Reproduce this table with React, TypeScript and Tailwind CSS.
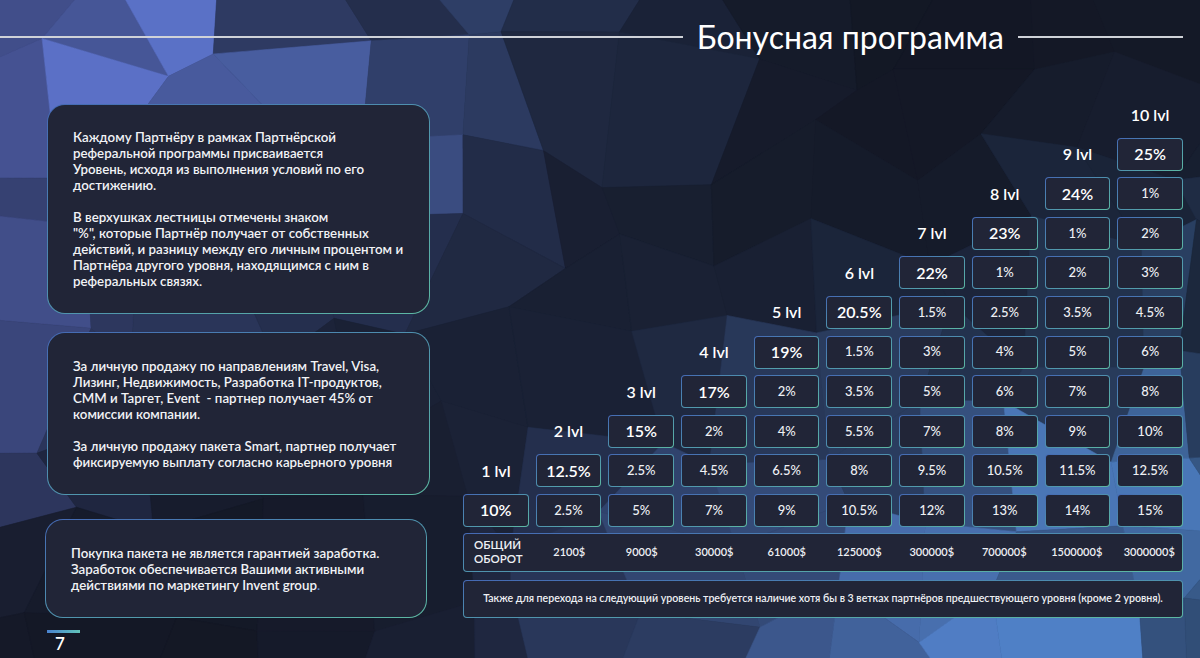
import React from 'react';

const font = { fontFamily: 'Lato, "Open Sans", sans-serif' };

// deterministic noise
function rnd(i: number) {
  const x = Math.sin(i * 127.1 + 311.7) * 43758.5453;
  return x - Math.floor(x);
}

function g(x: number, y: number, cx: number, cy: number, sx: number, sy: number) {
  const dx = (x - cx) / sx;
  const dy = (y - cy) / sy;
  return Math.exp(-(dx * dx + dy * dy));
}

function Mosaic() {
  const cw = 96;
  const ch = 92;
  const cols = 14;
  const rows = 9;
  const pts: { x: number; y: number }[][] = [];
  for (let r = 0; r <= rows; r++) {
    const row: { x: number; y: number }[] = [];
    for (let c = 0; c <= cols; c++) {
      const k = r * 31 + c * 7;
      row.push({
        x: c * cw - 40 + (rnd(k) - 0.5) * cw * 0.75,
        y: r * ch - 30 + (rnd(k + 1000) - 0.5) * ch * 0.75,
      });
    }
    pts.push(row);
  }
  const polys: { d: string; fill: string }[] = [];
  for (let r = 0; r < rows; r++) {
    for (let c = 0; c < cols; c++) {
      const a = pts[r][c], b = pts[r][c + 1], d = pts[r + 1][c + 1], e = pts[r + 1][c];
      const cx = (a.x + b.x + d.x + e.x) / 4;
      const cy = (a.y + b.y + d.y + e.y) / 4;
      let w =
        1.0 * g(cx, cy, 160, 110, 280, 210) +
        0.45 * g(cx, cy, 0, 380, 110, 170) +
        1.0 * g(cx, cy, 980, 640, 360, 240) +
        0.3 * g(cx, cy, 1160, 360, 140, 200) +
        0.2 * g(cx, cy, 560, 40, 160, 120);
      w = Math.min(1, w * (0.55 + 0.8 * rnd(r * 53 + c * 17 + 5)));
      const t = Math.min(1, Math.max(0, cx / 1200));
      const br = [92 - 14 * t, 110 + 20 * t, 198];
      const dk = [19, 23, 36];
      const col = dk.map((v, i) => Math.round(v + (br[i] - v) * w));
      polys.push({
        d: `M${a.x},${a.y} L${b.x},${b.y} L${d.x},${d.y} L${e.x},${e.y} Z`,
        fill: `rgb(${col[0]},${col[1]},${col[2]})`,
      });
    }
  }
  return (
    <svg className="absolute inset-0" width="1200" height="658" viewBox="0 0 1200 658">
      <rect width="1200" height="658" fill="#151a29" />
      {polys.map((p, i) => (
        <path key={i} d={p.d} fill={p.fill} stroke={p.fill} strokeWidth="0.6" />
      ))}
    </svg>
  );
}

const rows: string[][] = [
  ['25%'],
  ['24%', '1%'],
  ['23%', '1%', '2%'],
  ['22%', '1%', '2%', '3%'],
  ['20.5%', '1.5%', '2.5%', '3.5%', '4.5%'],
  ['19%', '1.5%', '3%', '4%', '5%', '6%'],
  ['17%', '2%', '3.5%', '5%', '6%', '7%', '8%'],
  ['15%', '2%', '4%', '5.5%', '7%', '8%', '9%', '10%'],
  ['12.5%', '2.5%', '4.5%', '6.5%', '8%', '9.5%', '10.5%', '11.5%', '12.5%'],
  ['10%', '2.5%', '5%', '7%', '9%', '10.5%', '12%', '13%', '14%', '15%'],
];

const turnover = ['2100$', '9000$', '30000$', '61000$', '125000$', '300000$', '700000$', '1500000$', '3000000$'];

function Frame({ className, inner, children }: { className?: string; inner?: string; children: React.ReactNode }) {
  return (
    <div className={`bg-gradient-to-br from-[#4569b4] to-[#5db9a3] p-px ${className ?? ''}`}>
      <div className={`h-full w-full bg-[#212537] ${inner ?? ''}`}>{children}</div>
    </div>
  );
}

function Cell({ value, big }: { value: string; big?: boolean }) {
  return (
    <Frame className="rounded-[4px]" inner="rounded-[3px] flex items-center justify-center">
      <span className={big ? 'text-[16px] font-semibold text-white' : 'text-[13px] font-medium text-[#eef0f4]'}>{value}</span>
    </Frame>
  );
}

export default function App() {
  const grid: React.ReactNode[] = [];
  for (let r = 0; r <= 10; r++) {
    for (let c = 1; c <= 10; c++) {
      const key = `${r}-${c}`;
      if (r <= 9 && c === 10 - r) {
        grid.push(
          <div key={key} className="flex items-center justify-center text-[16px] font-semibold text-white">
            {10 - r} lvl
          </div>
        );
      } else if (r >= 1 && c >= 11 - r) {
        const vals = rows[r - 1];
        const idx = c - (11 - r);
        grid.push(<Cell key={key} value={vals[idx]} big={idx === 0} />);
      } else {
        grid.push(<div key={key} />);
      }
    }
  }

  return (
    <div className="relative h-[658px] w-[1200px] overflow-hidden bg-[#151a29] text-white" style={font}>
      <Mosaic />
      <div className="relative flex flex-col">
        {/* header */}
        <div className="flex h-[74px] items-center pr-[17px]">
          <div className="h-[1.5px] flex-1 bg-[#cfd2d8]" />
          <h1 className="mx-[14px] text-[32px] font-normal leading-none text-white">Бонусная программа</h1>
          <div className="h-[1.5px] w-[165px] bg-[#cfd2d8]" />
        </div>

        <div className="flex pl-[47px]">
          {/* left column */}
          <div className="flex w-[383px] flex-col pt-[30px] text-[13.3px] font-semibold leading-[16px] text-[#f2f3f6]">
            <Frame className="h-[210px] rounded-[18px]" inner="rounded-[17px] flex items-center pl-[25px]">
              <div className="whitespace-nowrap">
                <p>
                  Каждому Партнёру в рамках Партнёрской<br />
                  реферальной программы присваивается<br />
                  Уровень, исходя из выполнения условий по его<br />
                  достижению.
                </p>
                <p className="mt-4">
                  В верхушках лестницы отмечены знаком<br />
                  "%", которые Партнёр получает от собственных<br />
                  действий, и разницу между его личным процентом и<br />
                  Партнёра другого уровня, находящимся с ним в<br />
                  реферальных связях.
                </p>
              </div>
            </Frame>

            <Frame className="mt-[18px] h-[163px] rounded-[18px]" inner="rounded-[17px] flex items-center pl-[25px]">
              <div className="whitespace-nowrap">
                <p>
                  За личную продажу по направлениям Travel, Visa,<br />
                  Лизинг, Недвижимость, Разработка IT-продуктов,<br />
                  СММ и Таргет, Event&nbsp; - партнер получает 45% от<br />
                  комиссии компании.
                </p>
                <p className="mt-4">
                  За личную продажу пакета Smart, партнер получает<br />
                  фиксируемую выплату согласно карьерного уровня
                </p>
              </div>
            </Frame>

            <Frame className="-ml-[2px] mt-[24px] h-[99px] w-[382px] rounded-[18px]" inner="rounded-[17px] flex items-center pl-[25px]">
              <p className="whitespace-nowrap">
                Покупка пакета не является гарантией заработка.<br />
                Заработок обеспечивается Вашими активными<br />
                действиями по маркетингу Invent group<span className="text-[#5b8fd6]">.</span>
              </p>
            </Frame>

            <div className="mt-[12px] h-[3px] w-[33px] bg-gradient-to-r from-[#4a82d0] to-[#63c3b8]" />
            <div className="ml-[8px] mt-[1px] text-[17px] font-semibold leading-[20px] text-white">7</div>
          </div>

          {/* right ladder */}
          <div className="ml-[33px] flex w-[720px] flex-col pt-[24px]">
            <div className="grid grid-cols-10 auto-rows-[33px] gap-x-[7px] gap-y-[6.6px]">{grid}</div>

            <Frame className="mt-[6px] h-[39px] rounded-[4px]" inner="rounded-[3px] grid grid-cols-10 gap-x-[7px] items-center">
              <div className="pl-[10px] text-[11.5px] font-semibold leading-[14px] text-[#eef0f4]">
                ОБЩИЙ<br />ОБОРОТ
              </div>
              {turnover.map((t) => (
                <div key={t} className="text-center text-[11px] font-semibold text-[#eef0f4]">
                  {t}
                </div>
              ))}
            </Frame>

            <Frame className="mt-[8px] h-[38px] rounded-[4px]" inner="rounded-[3px] flex items-center justify-center">
              <p className="whitespace-nowrap text-[10.6px] font-semibold text-[#eef0f4]">
                Также для перехода на следующий уровень требуется наличие хотя бы в 3 ветках партнёров предшествующего уровня (кроме 2 уровня).
              </p>
            </Frame>
          </div>
        </div>
      </div>
    </div>
  );
}
